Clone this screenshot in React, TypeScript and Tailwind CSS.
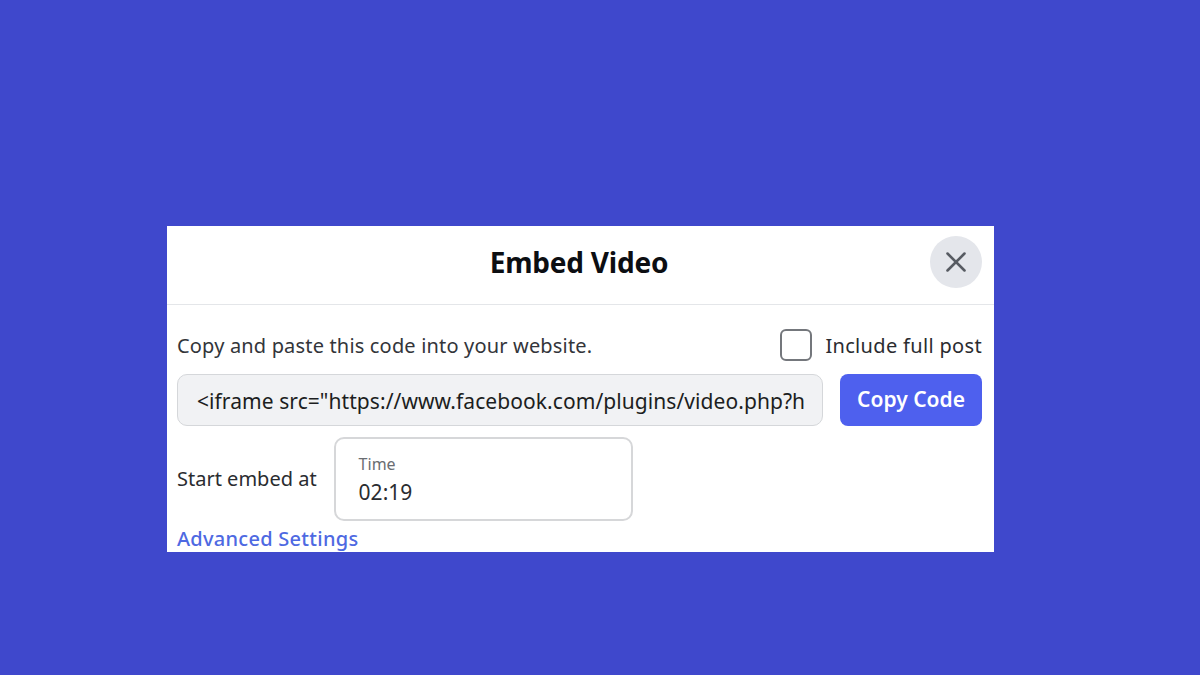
import { X } from "lucide-react";

const font = "font-['Noto_Sans','Open_Sans',sans-serif]";

export default function App() {
  return (
    <div className={`${font} w-[1200px] h-[675px] overflow-hidden bg-[#3f48cc] pt-[226px] pl-[167px]`}>
      <div className="w-[827px] h-[326px] bg-white overflow-hidden">
        {/* header */}
        <div className="relative h-[79px] border-b border-[#e4e6e9] flex items-center justify-center pb-[7px] pr-[3px]">
          <h1 className="text-[28px] leading-8 font-bold text-[#0c0e12] tracking-[-0.2px]">Embed Video</h1>
          <button className="absolute right-[12px] top-[10px] w-[52px] h-[52px] rounded-full bg-[#e4e6eb] flex items-center justify-center">
            <X size={34} strokeWidth={1.8} className="text-[#575b62]" />
          </button>
        </div>

        <div className="pl-[10px] pr-[12px]">
          <div className="flex items-center justify-between mt-[24px] h-[32px]">
            <span className="pt-[2px] text-[20px] leading-7 text-[#33353a] tracking-[0.17px]">Copy and paste this code into your website.</span>
            <label className="flex items-center gap-[13px]">
              <span className="w-[32px] h-[32px] rounded-[6px] border-2 border-[#74777c] bg-white" />
              <span className="pt-[2px] text-[20px] leading-7 text-[#2a2c30] tracking-[0.33px]">Include full post</span>
            </label>
          </div>

          <div className="flex items-center gap-[17px] mt-[13px]">
            <div className="w-[646px] h-[52px] rounded-[10px] border-[1.5px] border-[#d5d7da] bg-[#f1f2f4] pl-[19px] pr-[16px] pt-[3px] flex items-center overflow-hidden whitespace-nowrap text-[21px] text-[#1c1e21] tracking-[0.07px]">
              &lt;iframe src="https://www.facebook.com/plugins/video.php?h
            </div>
            <button className="w-[142px] h-[52px] rounded-[8px] bg-[#4e60ee] text-white text-[21px] font-semibold">
              Copy Code
            </button>
          </div>

          <div className="flex items-center gap-[17px] mt-[11px]">
            <span className="text-[20px] leading-7 text-[#2a2c30]">Start embed at</span>
            <div className="w-[299px] h-[84px] rounded-[10px] border-2 border-[#d6d7d9] bg-white pl-[23px] pt-[15px]">
              <div className="text-[16px] leading-[20px] text-[#6a6d72]">Time</div>
              <div className="pt-[1px] text-[21px] leading-[34px] text-[#2a2c30]">02:19</div>
            </div>
          </div>

          <a className="block mt-[4px] text-[20px] leading-7 font-medium text-[#4e69e2] tracking-[0.27px]">Advanced Settings</a>
        </div>
      </div>
    </div>
  );
}
